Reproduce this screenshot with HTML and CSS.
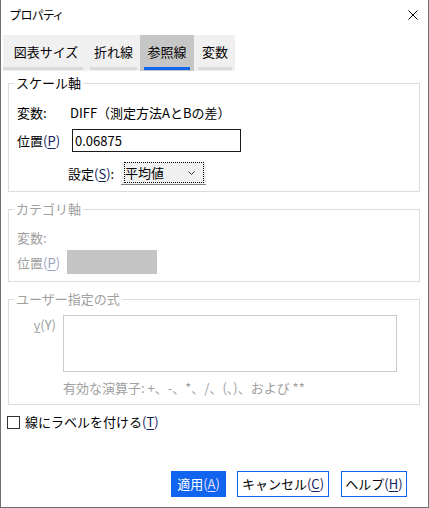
FILE: index.html
```html
<!DOCTYPE html>
<html lang="ja">
<head>
<meta charset="utf-8">
<title>プロパティ</title>
<link rel="stylesheet" href="styles.css">
</head>
<body>
<div class="window">
  <div class="titlebar">
    <span class="title">プロパティ</span>
    <svg class="close" width="10" height="10" viewBox="0 0 10 10"><path d="M0.5 0.5L9.5 9.5M9.5 0.5L0.5 9.5" stroke="#000" stroke-width="1" fill="none"/></svg>
  </div>
  <div class="tabs">
    <div class="tab t1"><span class="tab-in">図表サイズ</span></div>
    <div class="tab t2"><span class="tab-in">折れ線</span></div>
    <div class="tab t3 active"><span class="tab-in">参照線</span></div>
    <div class="tab t4"><span class="tab-in">変数</span></div>
  </div>

  <fieldset class="group g1">
    <legend>スケール軸</legend>
    <div class="row r1">
      <span class="lbl w53">変数:</span>
      <span class="val">DIFF（測定方法AとBの差）</span>
    </div>
    <div class="row r2">
      <span class="lbl w55">位置<span class="mn">(<u>P</u>)</span></span>
      <div class="input">0.06875</div>
    </div>
    <div class="row r3">
      <span class="lbl w53">設定<span class="mn">(<u>S</u>)</span>:</span>
      <div class="select">
        <div class="focus">
          <span>平均値</span>
          <svg class="chev" width="7" height="4" viewBox="0 0 7 4"><path d="M0.5 0.5L3.5 3.5L6.5 0.5" stroke="#333" stroke-width="1" fill="none"/></svg>
        </div>
      </div>
    </div>
  </fieldset>

  <fieldset class="group g2 disabled">
    <legend>カテゴリ軸</legend>
    <div class="row r1">
      <span class="lbl">変数:</span>
    </div>
    <div class="row r2">
      <span class="lbl w50">位置<span class="mn">(<u>P</u>)</span></span>
      <div class="graybox"></div>
    </div>
  </fieldset>

  <fieldset class="group g3 disabled">
    <legend>ユーザー指定の式</legend>
    <div class="expr">
      <span class="ylbl"><u>y</u>(Y)</span>
      <div class="textarea"></div>
    </div>
    <div class="hint">有効な演算子: +、-、*、/、(、)、および **</div>
  </fieldset>

  <label class="check">
    <span class="box"></span>
    <span>線にラベルを付ける<span class="mn">(<u>T</u>)</span></span>
  </label>

  <div class="buttons">
    <div class="btn primary b1">適用<span class="mn">(<u>A</u>)</span></div>
    <div class="btn b2">キャンセル<span class="mn">(<u>C</u>)</span></div>
    <div class="btn b3">ヘルプ<span class="mn">(<u>H</u>)</span></div>
  </div>
</div>
</body>
</html>
```

FILE: styles.css
```css
* { box-sizing: border-box; }
html, body { margin: 0; padding: 0; background: #fff; }
body {
  font-family: "Noto Sans CJK JP", "Noto Sans", sans-serif;
  font-size: 13px;
  color: #000;
}
u { text-decoration: underline; text-underline-offset: 2px; text-decoration-thickness: 1px; }

.window {
  width: 429px;
  height: 508px;
  border: 1px solid #707070;
  border-top: none;
  display: flex;
  flex-direction: column;
  background: #fff;
}

.titlebar {
  height: 30px;
  display: flex;
  align-items: center;
  justify-content: space-between;
  padding: 0 10px 0 9px;
}
.title { font-size: 12px; line-height: 16px; font-feature-settings: "palt"; letter-spacing: -0.3px; }
.close { display: block; }

.tabs {
  margin: 5px 0 0 2px;
  align-self: flex-start;
  display: flex;
  height: 36px;
  background: #f0f0f0;
}
.tab {
  height: 36px;
  padding-bottom: 1px;
  display: flex;
  align-items: flex-end;
}
.tab-in {
  display: block;
  height: 35px;
  padding-top: 2px;
  line-height: 30px;
  text-align: center;
  border-bottom: 3px solid #dadada;
}
.t1 { padding-right: 4px; }
.t1 .tab-in { width: 80px; padding-left: 6px; }
.t2 { padding-left: 3px; padding-right: 3px; }
.t2 .tab-in { width: 47px; }
.t3 { padding-left: 4px; padding-right: 4px; }
.t3 .tab-in { width: 46px; }
.t4 { padding-left: 4px; padding-right: 3px; }
.t4 .tab-in { width: 34px; }
.tab.active { background: #c6c6c6; }
.tab.active .tab-in { border-bottom-color: #1064ee; }

.group {
  margin: 0 8px 0 7px;
  padding: 0 8px;
  border: 1px solid #dcdcdc;
  min-width: 0;
}
.group legend {
  padding: 0 2px;
  margin-left: -3px;
  line-height: 16px;
  height: 16px;
}
.g1 { margin-top: 4px; padding-top: 11px; padding-bottom: 6px; }
.g2 { margin-top: 9px; padding-top: 10px; padding-bottom: 7px; }
.g3 { margin-top: 9px; padding-top: 8px; padding-bottom: 7px; }

.disabled, .disabled legend { color: #a0a0a0; }
.disabled .mn { color: #9aa3bf; }
.mn { color: #14205a; }

.row { display: flex; align-items: center; }
.lbl { flex: none; white-space: nowrap; }
.w53 { width: 53px; }
.w55 { width: 55px; }
.w50 { width: 50px; }

.g1 .r1 { height: 20px; }
.g1 .r2 { height: 23px; margin-top: 7px; }
.g1 .r3 { height: 23px; margin-top: 10px; padding-left: 51px; }

.input {
  width: 169px;
  height: 23px;
  border: 1px solid #1a1a1a;
  padding-left: 2px;
  line-height: 21px;
}

.select {
  width: 85px;
  height: 23px;
  background: #f0f0f0;
  border-bottom: 1px solid #808080;
  padding: 0 2px 1px 3px;
}
.focus {
  height: 21px;
  border: 1px dotted #000;
  display: flex;
  align-items: center;
  justify-content: space-between;
  padding: 0 8px 0 0;
  line-height: 19px;
}
.chev { display: block; }

.g2 .r1 { height: 20px; }
.g2 .r2 { height: 24px; margin-top: 3px; }
.graybox { width: 90px; height: 24px; background: #c4c4c4; }

.expr { display: flex; align-items: flex-start; }
.ylbl {
  width: 46px;
  flex: none;
  text-align: right;
  padding-right: 7px;
  line-height: 20px;
}
.textarea {
  width: 334px;
  height: 57px;
  border: 1px solid #cbcbcb;
}
.hint {
  margin: 7px 0 0 46px;
  line-height: 18px;
  height: 18px;
  white-space: nowrap;
}

.check {
  margin: 10px 0 0 6px;
  display: flex;
  align-items: center;
  height: 14px;
  line-height: 16px;
}
.box {
  width: 13px;
  height: 13px;
  border: 1px solid #333;
  margin-right: 5px;
  flex: none;
}

.buttons {
  margin-top: auto;
  display: flex;
  justify-content: flex-end;
  gap: 11px;
  padding: 0 21px 10px 0;
}
.btn {
  height: 26px;
  border: 1px solid #1064ee;
  display: flex;
  align-items: center;
  justify-content: center;
  line-height: 20px;
  background: #fff;
}
.b1 { width: 55px; }
.b2 { width: 92px; }
.b3 { width: 66px; margin-left: 1px; }
.btn.primary { background: #1064ee; color: #fff; }
.btn.primary .mn { color: #e4e0ff; }
```
